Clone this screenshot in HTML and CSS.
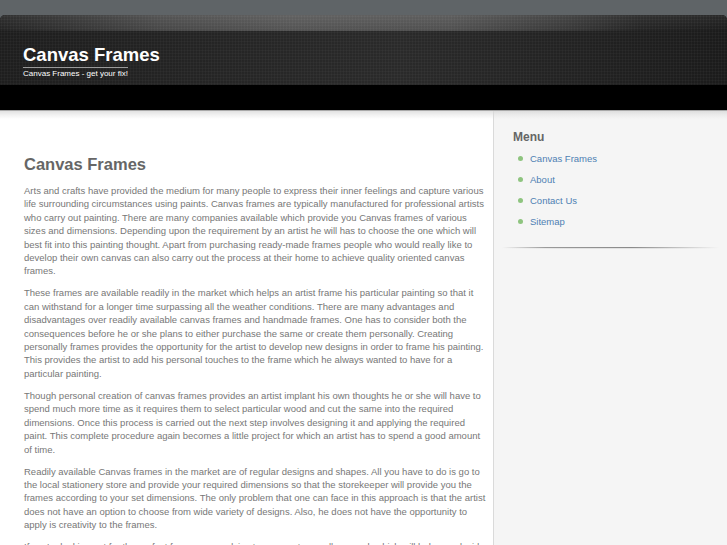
FILE: index.html
```html
<!DOCTYPE html>
<html lang="en">
<head>
<meta charset="utf-8">
<title>Canvas Frames</title>
<link rel="stylesheet" href="styles.css">
</head>
<body>
<div class="header">
  <div class="header-shine"></div>
  <div class="header-main">
    <h1 class="site-title">Canvas Frames</h1>
    <div class="tagline">Canvas Frames - get your fix!</div>
  </div>
  <div class="header-bar"></div>
</div>
<div class="page">
  <div class="content">
    <h2 class="post-title">Canvas Frames</h2>
    <p>Arts and crafts have provided the medium for many people to express their inner feelings and capture various life surrounding circumstances using paints. Canvas frames are typically manufactured for professional artists who carry out painting. There are many companies available which provide you Canvas frames of various sizes and dimensions. Depending upon the requirement by an artist he will has to choose the one which will best fit into this painting thought. Apart from purchasing ready-made frames people who would really like to develop their own canvas can also carry out the process at their home to achieve quality oriented canvas frames.</p>
    <p>These frames are available readily in the market which helps an artist frame his particular painting so that it can withstand for a longer time surpassing all the weather conditions. There are many advantages and disadvantages over readily available canvas frames and handmade frames. One has to consider both the consequences before he or she plans to either purchase the same or create them personally. Creating personally frames provides the opportunity for the artist to develop new designs in order to frame his painting. This provides the artist to add his personal touches to the frame which he always wanted to have for a particular painting.</p>
    <p>Though personal creation of canvas frames provides an artist implant his own thoughts he or she will have to spend much more time as it requires them to select particular wood and cut the same into the required dimensions. Once this process is carried out the next step involves designing it and applying the required paint. This complete procedure again becomes a little project for which an artist has to spend a good amount of time.</p>
    <p>Readily available Canvas frames in the market are of regular designs and shapes. All you have to do is go to the local stationery store and provide your required dimensions so that the storekeeper will provide you the frames according to your set dimensions. The only problem that one can face in this approach is that the artist does not have an option to choose from wide variety of designs. Also, he does not have the opportunity to apply is creativity to the frames.</p>
    <p>If you're looking out for the perfect frames your advice to carry out a small research which will help you decide the right kind of frames for your painting and you can then choose between readily available frames and personally made ones.</p>
  </div>
  <div class="sidebar">
    <h3 class="widget-title">Menu</h3>
    <ul class="menu">
      <li><a href="#">Canvas Frames</a></li>
      <li><a href="#">About</a></li>
      <li><a href="#">Contact Us</a></li>
      <li><a href="#">Sitemap</a></li>
    </ul>
    <div class="widget-sep"></div>
  </div>
</div>
</body>
</html>
```
FILE: styles.css
```css
html, body {
  margin: 0;
  padding: 0;
}
body {
  background: #5f6467;
  font-family: "Liberation Sans", Arial, sans-serif;
  padding-top: 15px;
  overflow: hidden;
}
.header {
  border-radius: 5px 5px 0 0;
  overflow: hidden;
  background-color: #1f1f1f;
}
.header-shine {
  height: 16px;
  background:
    radial-gradient(circle, rgba(255,255,255,0.06) 0.8px, transparent 1.2px) 0 0 / 3px 3px,
    linear-gradient(to bottom, rgba(255,255,255,0.05), rgba(0,0,0,0.08)),
    linear-gradient(to right, #262626 0%, #333 8%, #4c4c4c 22%, #595959 40%, #555 62%, #3c3c3c 78%, #262626 88%, #1e1e1e 100%);
}
.header-main {
  height: 54px;
  padding: 0 23px;
  box-sizing: border-box;
  background:
    radial-gradient(circle, rgba(255,255,255,0.05) 0.8px, transparent 1.2px) 0 0 / 3px 3px,
    linear-gradient(to right, #1e1e1e 0%, #262626 35%, #2a2a2a 55%, #222 80%, #1b1b1b 100%);
  overflow: hidden;
}
.site-title {
  margin: 0;
  padding-top: 13px;
  font-size: 18.5px;
  line-height: 22px;
  font-weight: bold;
  color: #ffffff;
}
.tagline {
  width: fit-content;
  margin-top: 1px;
  border-top: 1px solid #9a9a9a;
  padding-top: 1px;
  font-size: 8px;
  line-height: 10px;
  color: #ffffff;
}
.header-bar {
  height: 25px;
  background: #000;
  border-bottom: 1px solid #a9a9a9;
}
.page {
  display: flex;
  background: #ffffff;
  background-image: linear-gradient(to bottom, #e2e2e2 0, #f2f2f2 4px, #ffffff 8px);
  background-size: 100% 10px;
  background-repeat: no-repeat;
}
.content {
  width: 466px;
  padding: 43px 3px 0 24px;
  color: #777;
}
.post-title {
  margin: 0 0 10px;
  font-size: 16.5px;
  line-height: 20px;
  font-weight: bold;
  color: #666;
}
.content p {
  margin: 0 0 8.6px;
  font-size: 9.5px;
  line-height: 13.4px;
}
.sidebar {
  flex: 1;
  border-left: 1px solid #dadada;
  background: #f5f5f5;
  background-image: linear-gradient(to bottom, #dedede 0, #ececec 4px, #f5f5f5 8px);
  background-size: 100% 10px;
  background-repeat: no-repeat;
  padding: 19px 8px 0 8px;
  min-height: 500px;
}
.widget-title {
  margin: 0 0 4px 11px;
  font-size: 12px;
  line-height: 14px;
  font-weight: bold;
  color: #666;
}
.menu {
  list-style: none;
  margin: 0;
  padding: 0 0 0 16px;
}
.menu li {
  display: flex;
  align-items: center;
  height: 21px;
  font-size: 9.5px;
}
.menu li::before {
  content: "";
  width: 5px;
  height: 5px;
  border-radius: 50%;
  background: #8ec47f;
  margin: 0 7px 0 0;
}
.menu a {
  color: #4e7fb3;
  text-decoration: none;
}
.widget-sep {
  margin-top: 15px;
  height: 2px;
  background:
    linear-gradient(to right, rgba(160,160,160,0), #9a9a9a 20%, #8a8a8a 60%, rgba(160,160,160,0)) 0 0 / 100% 1px no-repeat,
    linear-gradient(to right, rgba(230,230,230,0), #e2e2e2 30%, #e2e2e2 70%, rgba(230,230,230,0)) 0 1px / 100% 1px no-repeat;
}
```
